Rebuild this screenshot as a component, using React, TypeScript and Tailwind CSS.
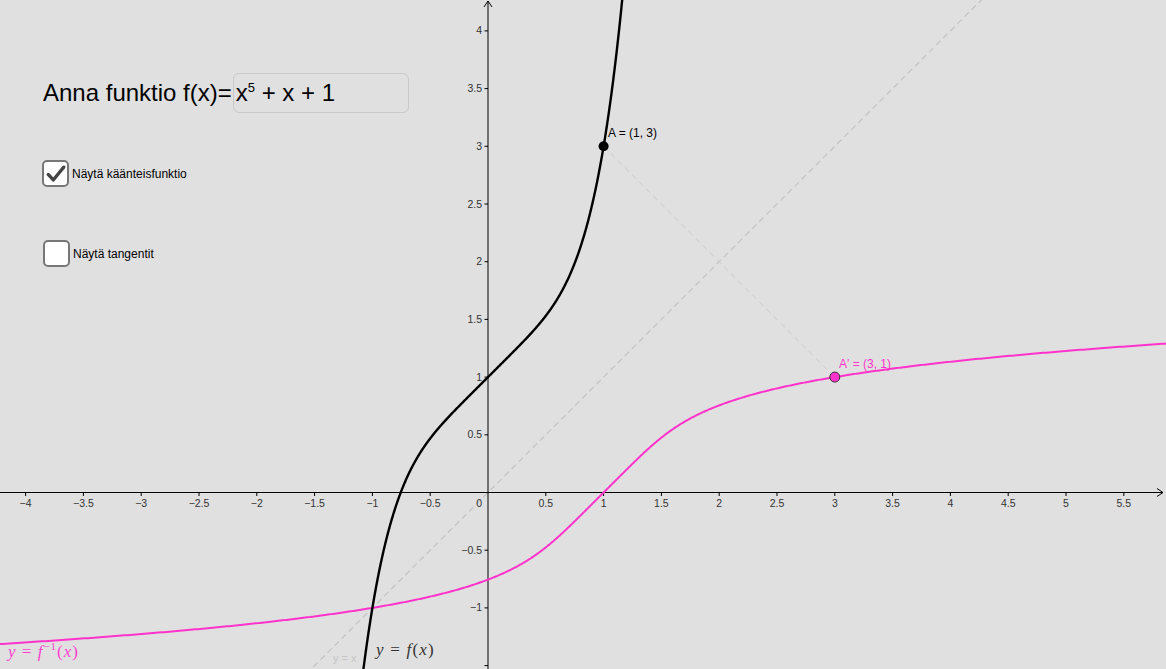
import React from "react";

const W = 1166;
const H = 669;
const OX = 488;
const OY = 492.5;
const S = 115.6;
const SY = 115.4;

const px = (x: number) => OX + x * S;
const py = (y: number) => OY - y * SY;
const f = (t: number) => t ** 5 + t + 1;

function buildPath(pts: [number, number][]) {
  return pts.map(([x, y], i) => `${i ? "L" : "M"}${x.toFixed(2)},${y.toFixed(2)}`).join(" ");
}

const fPath = (() => {
  const pts: [number, number][] = [];
  for (let t = -1.3; t <= 1.35; t += 0.002) pts.push([px(t), py(f(t))]);
  return buildPath(pts);
})();

const invPath = (() => {
  const pts: [number, number][] = [];
  for (let t = -1.5; t <= 1.6; t += 0.002) pts.push([px(f(t)), py(t)]);
  return buildPath(pts);
})();

const fmt = (v: number) => (v < 0 ? "\u2212" + String(-v) : String(v));

const xTicks: number[] = [];
for (let v = -4; v <= 5.5; v += 0.5) if (v !== 0) xTicks.push(v);
const yTicks: number[] = [];
for (let v = -1.5; v <= 4; v += 0.5) if (v !== 0) yTicks.push(v);

function Graph() {
  return (
    <svg width={W} height={H} viewBox={`0 0 ${W} ${H}`} className="block">
      {/* y = x */}
      <line x1={px(-2)} y1={py(-2)} x2={px(5)} y2={py(5)} stroke="#c4c4c4" strokeWidth={1.3} strokeDasharray="6 4" />
      {/* A to A' */}
      <line x1={px(1)} y1={py(3)} x2={px(3)} y2={py(1)} stroke="#d2d2d2" strokeWidth={1.2} strokeDasharray="6 4" />

      {/* axes */}
      <line x1={0} y1={OY} x2={1163} y2={OY} stroke="#000" strokeWidth={1} />
      <path d={`M1157,${OY - 4} L1163,${OY} L1157,${OY + 4}`} fill="none" stroke="#000" strokeWidth={1} />
      <line x1={OX} y1={H} x2={OX} y2={1} stroke="#000" strokeWidth={1} />
      <path d={`M${OX - 4},7 L${OX},1 L${OX + 4},7`} fill="none" stroke="#000" strokeWidth={1} />

      <g fontFamily='"Liberation Sans", Arial, sans-serif' fontSize={10.5} fill="#333">
        {xTicks.map((v) => (
          <g key={"x" + v}>
            <line x1={px(v)} y1={OY} x2={px(v)} y2={OY + 3.5} stroke="#000" strokeWidth={1} />
            <text x={px(v)} y={OY + 14.5} textAnchor="middle">
              {fmt(v)}
            </text>
          </g>
        ))}
        {yTicks.map((v) => (
          <g key={"y" + v}>
            <line x1={OX - 3.5} y1={py(v)} x2={OX} y2={py(v)} stroke="#000" strokeWidth={1} />
            {v > -1.5 && (
              <text x={OX - 6} y={py(v) + 3.5} textAnchor="end">
                {fmt(v)}
              </text>
            )}
          </g>
        ))}
        <text x={OX - 6} y={OY + 14.5} textAnchor="end">
          0
        </text>
      </g>

      {/* curves */}
      <path d={invPath} fill="none" stroke="#ff33cc" strokeWidth={2} />
      <path d={fPath} fill="none" stroke="#000" strokeWidth={2.4} />

      {/* points */}
      <circle cx={px(1)} cy={py(3)} r={5} fill="#000" />
      <circle cx={px(3)} cy={py(1)} r={5} fill="#ff33cc" stroke="#333" strokeWidth={1} />

      <g fontFamily='"Liberation Sans", Arial, sans-serif' fontSize={12}>
        <text x={608} y={137} fill="#000">
          A = (1, 3)
        </text>
        <text x={839} y={368} fill="#ff33cc">
          A' = (3, 1)
        </text>
        <text x={333} y={662} fill="#c4c4c4" fontSize={11}>
          y = x
        </text>
      </g>

      <g fontFamily='"Liberation Serif", "Times New Roman", serif' fontSize={17} fontStyle="italic">
        <text x={8} y={657} fill="#ff40cf" letterSpacing={1}>
          y <tspan fontStyle="normal">=</tspan> f
          <tspan fontSize={11} dy={-7} fontStyle="normal">{"\u2212"}1</tspan>
          <tspan dy={7} fontStyle="normal">(</tspan>x<tspan fontStyle="normal">)</tspan>
        </text>
        <text x={376} y={655} fill="#333" letterSpacing={1.2}>
          y <tspan fontStyle="normal">=</tspan> f<tspan fontStyle="normal">(</tspan>x<tspan fontStyle="normal">)</tspan>
        </text>
      </g>
    </svg>
  );
}

function CheckBox({ checked, label }: { checked: boolean; label: string }) {
  return (
    <div className="flex items-center">
      <div className="w-[27px] h-[27px] rounded-[5px] border-2 border-[#777] bg-white flex items-center justify-center">
        {checked && (
          <svg width="22" height="22" viewBox="0 0 24 24">
            <path d="M3.5 12.5 L9 18.5 L20.5 4.5" fill="none" stroke="#444" strokeWidth={3.6} strokeLinecap="round" strokeLinejoin="round" />
          </svg>
        )}
      </div>
      <span className="ml-[3px] text-[12px] text-black">{label}</span>
    </div>
  );
}

export default function App() {
  return (
    <div
      className="relative w-[1166px] h-[669px] overflow-hidden bg-[#e0e0e0]"
      style={{ fontFamily: '"Liberation Sans", Arial, sans-serif' }}
    >
      <Graph />

      {/* applet controls over the canvas */}
      <div className="absolute left-[43px] top-[73px] flex items-center">
        <span className="text-[24px] leading-none text-black">Anna funktio f(x)=</span>
        <div className="ml-[1px] w-[176px] h-[40px] rounded-[6px] border border-[#c8c8c8] bg-[#e0e0e0] flex items-center pl-[2px]">
          <span className="text-[24px] leading-none text-black">
            x<sup className="text-[13px] -top-[9px]">5</sup> + x + 1
          </span>
        </div>
      </div>

      <div className="absolute left-[42px] top-[160px]">
        <CheckBox checked label="Näytä käänteisfunktio" />
      </div>
      <div className="absolute left-[43px] top-[240px]">
        <CheckBox checked={false} label="Näytä tangentit" />
      </div>
    </div>
  );
}
